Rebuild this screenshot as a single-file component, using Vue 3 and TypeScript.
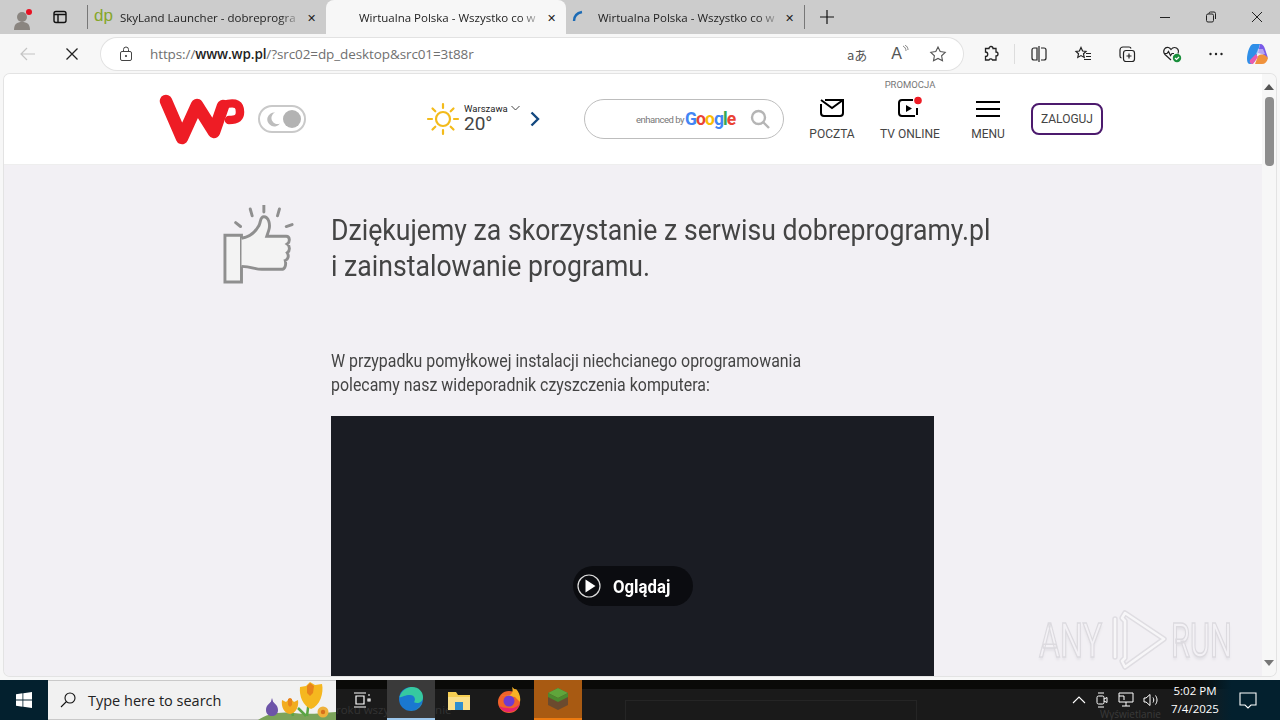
<template>
  <div class="screen">
    <div class="tabstrip">
      <div class="profile">
        <svg width="24" height="26" viewBox="0 0 24 26">
          <circle cx="12" cy="12" r="5" fill="#8a8580" />
          <path d="M4 25c0-6 3-8 8-8s8 2 8 8z" fill="#8a8580" />
          <circle cx="19" cy="7" r="3" fill="#e81123" />
        </svg>
      </div>
      <div class="tabs-btn">
        <svg width="16" height="16" viewBox="0 0 16 16" fill="none" stroke="#111" stroke-width="1.4">
          <rect x="2" y="2.5" width="12" height="11" rx="2" />
          <path d="M2 5.5h12M6 5.5v8" />
        </svg>
      </div>
      <div class="tab first">
        <span class="fav-dp">dp</span>
        <span class="tab-title">SkyLand Launcher - dobreprogra</span>
        <span class="tab-x">✕</span>
      </div>
      <div class="tab active">
        <span class="tab-title">Wirtualna Polska - Wszystko co w</span>
        <span class="tab-x">✕</span>
      </div>
      <div class="tab">
        <svg class="spinner" width="14" height="14" viewBox="0 0 14 14" fill="none">
          <path d="M2 11C2 6 5 3 10 2" stroke="#1c6bb5" stroke-width="2.4" />
        </svg>
        <span class="tab-title">Wirtualna Polska - Wszystko co w</span>
        <span class="tab-x">✕</span>
      </div>
      <div class="new-tab">
        <svg width="16" height="16" viewBox="0 0 16 16" stroke="#111" stroke-width="1.2"><path d="M8 1v14M1 8h14" /></svg>
      </div>
      <div class="win-controls">
        <svg width="12" height="12" viewBox="0 0 12 12" stroke="#222" fill="none"><path d="M1 6.5h10" /></svg>
        <svg width="12" height="12" viewBox="0 0 12 12" stroke="#222" fill="none"><rect x="1.5" y="3" width="7" height="8" rx="1.5" /><path d="M4 3V2.5A1.5 1.5 0 0 1 5.5 1H9a1.5 1.5 0 0 1 1.5 1.5V8" /></svg>
        <svg width="12" height="12" viewBox="0 0 12 12" stroke="#222" fill="none"><path d="M1 1l10 10M11 1L1 11" /></svg>
      </div>
    </div>

    <div class="toolbar">
      <svg class="nav-back" width="16" height="16" viewBox="0 0 16 16" fill="none" stroke="#c4c4c4" stroke-width="1.2"><path d="M15 8H1M7 2L1 8l6 6" /></svg>
      <svg class="nav-stop" width="14" height="14" viewBox="0 0 14 14" fill="none" stroke="#222" stroke-width="1.3"><path d="M1.5 1.5l11 11M12.5 1.5l-11 11" /></svg>
      <div class="address">
        <svg width="14" height="16" viewBox="0 0 14 16" fill="none" stroke="#444"><rect x="1.5" y="5.5" width="11" height="9" rx="1.5" /><path d="M4.5 5.5V3.5a2.5 2.5 0 0 1 5 0v2" /><circle cx="7" cy="10" r=".7" fill="#444" /></svg>
        <span class="url"><span class="dim">https://</span><b>www.wp.pl</b><span class="dim">/?src02=dp_desktop&amp;src01=3t88r</span></span>
        <div class="addr-icons">
          <span class="trans">aあ</span>
          <span class="read">A<svg width="7" height="10" viewBox="0 0 7 10" fill="none" stroke="#666" stroke-width=".8"><path d="M1 1c2 1 3 3 3 5M3 0c2 1 3 3 3 5" /></svg></span>
          <svg width="18" height="18" viewBox="0 0 18 18" fill="none" stroke="#555" stroke-width="1.1"><path d="M9 2l2.2 4.6 5 .7-3.600 3.500.9 5L9 13.400l-4.500 2.400.9-5L1.800 7.300l5-.7z" /></svg>
        </div>
      </div>
      <div class="tool-icons">
        <svg width="18" height="18" viewBox="0 0 18 18" fill="none" stroke="#222" stroke-width="1.3"><path d="M7 3.500a2 2 0 0 1 4 0h3v3.500a2 2 0 0 1 0 4V15h-3.500a2 2 0 0 0-3.500 0H3.500v-3.500a2 2 0 0 0 0-4.500V3.500z" /></svg>
        <span class="tool-sep"></span>
        <svg width="18" height="18" viewBox="0 0 18 18" fill="none" stroke="#222" stroke-width="1.2"><path d="M7 3H4a2 2 0 0 0-2 2v8a2 2 0 0 0 2 2h3zM11 3h3a2 2 0 0 1 2 2v8a2 2 0 0 1-2 2h-3M9 1v16" /></svg>
        <svg width="18" height="18" viewBox="0 0 18 18" fill="none" stroke="#222" stroke-width="1.2"><path d="M7 2.500l1.600 3.500 3.400.4-2.500 2.400.7 3.600L7 10.600l-3.200 1.800.7-3.600L2 6.400l3.400-.4zM12 8.500h5M12 11.500h5M10 14.500h7" /></svg>
        <svg width="18" height="18" viewBox="0 0 18 18" fill="none" stroke="#222" stroke-width="1.2"><rect x="5.500" y="5.500" width="11" height="11" rx="2.500" /><path d="M11 8.500v5M8.500 11h5M13 3.500A2 2 0 0 0 11 2H5a3 3 0 0 0-3 3v6a2 2 0 0 0 1.500 2" /></svg>
        <svg width="20" height="18" viewBox="0 0 20 18" fill="none" stroke="#222" stroke-width="1.2"><path d="M9 15L3 9.500C0 6 3 1.500 6.500 2.500 8 3 9 4.500 9 4.500S10.500 2.500 12.500 2.500c3 0 5 3 3.500 6M2 8.500h3l1.500-2 2 4 1.500-2h2" /><circle cx="15" cy="13" r="4.200" fill="#1a8f3c" stroke="none" /><path d="M13 13l1.500 1.500 2.500-2.500" stroke="#fff" /></svg>
        <svg width="16" height="16" viewBox="0 0 16 16" fill="#222"><circle cx="2.500" cy="8" r="1.200" /><circle cx="8" cy="8" r="1.200" /><circle cx="13.500" cy="8" r="1.200" /></svg>
        <svg class="copilot" width="24" height="24" viewBox="0 0 24 24">
          <path d="M7 2h7l-4 14c-1 4-3 6-6 6-2 0-3-2-3-5C1 11 4 2 7 2z" fill="#2f8fe8" />
          <path d="M14 2c3 0 4 2 5 5l3 9-6-4-4-1z" fill="#7a5be8" />
          <path d="M22 16c-1 4-3 6-6 6H9l3-8c3-3 7-2 10 2z" fill="#f0923c" />
          <path d="M7 22c-2 0-4-1-3-4l6-6 2 3z" fill="#e85bb0" />
          <path d="M12 7h5l2 5-6 1-3-1z" fill="#e8e0f8" opacity=".55" />
        </svg>
      </div>
    </div>

    <div class="viewport">
      <div class="page">
        <header class="site-header">
          <svg class="wp-logo" width="86" height="54" viewBox="0 0 86 54" fill="none" stroke="#ee1c25" stroke-linecap="round" stroke-linejoin="round">
            <path d="M7 8l16 37L38 12l17 27 9-26" stroke-width="12.5" />
            <path d="M64 12C78 8 81 12 81 19C81 25 78 27 70 27" stroke-width="8.5" />
          </svg>
          <div class="theme-toggle">
            <svg width="16" height="16" viewBox="0 0 16 16"><path d="M10 1.500a7 7 0 1 0 5 11 6 6 0 0 1-5-11z" fill="#bdbdbd" /></svg>
            <span class="knob"></span>
          </div>
          <div class="weather">
            <svg width="34" height="34" viewBox="0 0 34 34" fill="none" stroke="#f3bb1b" stroke-width="2.2" stroke-linecap="round">
              <circle cx="17" cy="17" r="7" />
              <path d="M17 2v4M17 28v4M2 17h4M28 17h4M6.500 6.500l2.800 2.800M24.700 24.700l2.800 2.800M6.500 27.500l2.800-2.800M24.700 9.300l2.800-2.800" />
            </svg>
            <div class="weather-text">
              <div class="city">Warszawa <svg width="9" height="6" viewBox="0 0 9 6" fill="none" stroke="#444"><path d="M.5 1l4 4 4-4" /></svg></div>
              <div class="temp">20°</div>
            </div>
            <svg width="10" height="16" viewBox="0 0 10 16" fill="none" stroke="#13487f" stroke-width="2.4"><path d="M1.500 1.500L8 8l-6.500 6.500" /></svg>
          </div>
          <div class="search">
            <span class="enhanced">enhanced by</span>
            <span class="google"><i class="b">G</i><i class="r">o</i><i class="y">o</i><i class="b">g</i><i class="g">l</i><i class="r">e</i></span>
            <svg width="20" height="20" viewBox="0 0 20 20" fill="none" stroke="#b5b5b5" stroke-width="2.4"><circle cx="8.500" cy="8.500" r="6.500" /><path d="M13 13l6 6" /></svg>
          </div>
          <div class="nav-item first-nav">
            <svg width="24" height="19" viewBox="0 0 24 19" fill="none" stroke="#000" stroke-width="2"><path d="M5 1h18v13a3 3 0 0 1-3 3H4a3 3 0 0 1-3-3V5M1 1l11 8 11-8" /></svg>
            <span>POCZTA</span>
          </div>
          <div class="nav-item">
            <small>PROMOCJA</small>
            <svg width="26" height="22" viewBox="0 0 26 22"><path d="M16 4H5a3 3 0 0 0-3 3v10a3 3 0 0 0 3 3h13" fill="none" stroke="#000" stroke-width="2" /><path d="M9 9l6 3.500-6 3.500z" /><path d="M20 12v7" stroke="#000" stroke-width="2" /><circle cx="21" cy="4.500" r="3.800" fill="#ee1c25" /></svg>
            <span>TV ONLINE</span>
          </div>
          <div class="nav-item">
            <svg width="24" height="18" viewBox="0 0 24 18" stroke="#000" stroke-width="2"><path d="M0 2h24M0 9h24M0 16h24" /></svg>
            <span>MENU</span>
          </div>
          <div class="login">ZALOGUJ</div>
        </header>

        <main class="content">
          <div class="thanks">
            <svg class="thumb" width="72" height="80" viewBox="0 0 74 82" fill="none" stroke="#8f8f8f">
              <path d="M2 31h17v48H2z" stroke-width="3" fill="#f3f3f3" />
              <path d="M19 34c8-1 14-6 18-13 2-4 1-9 5-9 5 0 7 8 5 14l-2 6h20c4 0 4 6 1 8 3 2 3 7 0 9 2 3 1 7-2 8 1 4 0 9-4 9H40c-8 0-10-3-21-3" stroke-width="3" fill="#f3f3f3" />
              <path d="M13 18l5 4M28 4l2 7M42 0v7M58 4l-2 7M71 20l-6 2" stroke-width="3" stroke-linecap="round" />
            </svg>
            <h1>Dziękujemy za skorzystanie z serwisu dobreprogramy.pl<br />i zainstalowanie programu.</h1>
          </div>
          <p class="lead">W przypadku pomyłkowej instalacji niechcianego oprogramowania<br />polecamy nasz wideporadnik czyszczenia komputera:</p>
          <div class="video">
            <div class="watch">
              <svg width="24" height="24" viewBox="0 0 24 24"><circle cx="12" cy="12" r="11" fill="none" stroke="#ddd" stroke-width="1.2" /><path d="M8.500 5.500l10 6.500-10 6.500z" fill="#fff" /></svg>
              <span>Oglądaj</span>
            </div>
          </div>
        </main>
      </div>

      <div class="scrollbar">
        <span class="arrow up"></span>
        <span class="thumb-bar"></span>
        <span class="arrow down"></span>
      </div>
    </div>

    <footer class="taskbar">
      <div class="ghost-text">roku wszystkie gronie</div>
      <div class="ghost-box"></div>
      <div class="ghost-note">Wyświetlanie</div>
      <div class="start">
        <svg width="16" height="16" viewBox="0 0 16 16" fill="#fff"><path d="M0 2.200l6.500-.9v6.300H0zM7.300 1.200L16 0v7.600H7.300zM0 8.400h6.500v6.300L0 13.800zM7.300 8.400H16V16l-8.700-1.200z" /></svg>
      </div>
      <div class="task-search">
        <svg width="16" height="16" viewBox="0 0 16 16" fill="none" stroke="#111" stroke-width="1.1"><circle cx="10" cy="6" r="5" /><path d="M6.500 9.500L1 15" /></svg>
        <span>Type here to search</span>
        <svg class="flowers" width="78" height="40" viewBox="0 0 78 40">
          <path d="M0 40c8-6 22-9 36-7s28 0 42-1v8z" fill="#7ba35a" />
          <path d="M52 12l-3 24M32 24l3 12M48 36l-8-8" stroke="#5aa544" stroke-width="2.500" fill="none" />
          <path d="M14 21c-2 2-6 4-6 9 0 4 3 6 6 6s6-2 6-6c0-5-4-7-6-9z" fill="#6d54a8" />
          <path d="M14 18l-1.500 5h3z" fill="#6d54a8" />
          <path d="M24 20l4 2 4-4 4 4 4-2c1 7-2 13-8 14-6-1-9-7-8-14z" fill="#f2ac1f" />
          <path d="M30 19l2-1 2 1 0 6-2 2-2-2z" fill="#e8831a" />
          <path d="M42 7l6-1 4-4 5 3 7-1c2 9-2 22-11 25-8-3-12-13-11-22z" fill="#f5b71f" />
          <path d="M49 6l3-3 4 3-1 7-3 3-3-3z" fill="#e8831a" />
          <circle cx="65" cy="32" r="5.500" fill="#eeb13a" />
          <circle cx="65" cy="32" r="2.200" fill="#d6701c" />
        </svg>
      </div>
      <div class="task-apps">
        <div class="app wide">
          <svg width="18" height="16" viewBox="0 0 18 16" fill="none" stroke="#fff" stroke-width="1.2"><path d="M1 1h12M1 15h12M3 4h8v8H3zM15 3h2M15 7h2v2h-2z" /></svg>
        </div>
        <div class="app edge">
          <svg width="26" height="26" viewBox="0 0 26 26">
            <circle cx="13" cy="13" r="12" fill="#1a78d0" />
            <path d="M1.500 11C4 3 11 1 14 1c7 0 11 5 11 10 0 4-3 6-6 6-2 0-3-1-3-1 2-2 1-7-4-7-6 0-8.500 3-10.500 2z" fill="#36c9a0" />
            <path d="M24 17c-2 5-7 8-12 8 3 0 7-1 10-5z" fill="#5fd070" />
          </svg>
        </div>
        <div class="app">
          <svg width="24" height="22" viewBox="0 0 24 22"><path d="M1 3h8l2 3h12v15H1z" fill="#f7cf52" /><path d="M1 8h22v13H1z" fill="#fbe08a" /><path d="M8 13h8v8H8z" fill="#2f8fd0" /></svg>
        </div>
        <div class="app wide">
          <svg width="26" height="28" viewBox="0 0 26 28"><circle cx="13" cy="16" r="11" fill="#f0622a" /><path d="M5 9c3 1 6 1 9 0 3-2 3-5 2-8 2 1 2 3 4 2 3 3 5 8 4 13l-5-5z" fill="#f9b225" /><path d="M3 20c2 4 6 6 10 6 5 0 9-3 11-8-3 3-7 5-12 4-4 0-7-1-9-2z" fill="#e8246a" /><circle cx="13" cy="15" r="5.500" fill="#6f3bd0" /></svg>
        </div>
        <div class="app minecraft">
          <svg width="24" height="24" viewBox="0 0 24 24"><path d="M12 1l10 5v12l-10 5-10-5V6z" fill="#6b4a2e" /><path d="M12 1l10 5-10 5L2 6z" fill="#5fa53b" /><path d="M2 6l10 5v4L2 10zM22 6l-10 5v4l10-5z" fill="#4b8a2e" /></svg>
        </div>
      </div>
      <div class="tray">
        <svg width="14" height="8" viewBox="0 0 14 8" fill="none" stroke="#fff" stroke-width="1.1"><path d="M1 7l6-6 6 6" /></svg>
        <svg width="14" height="18" viewBox="0 0 14 18" fill="none" stroke="#fff"><rect x="2" y="5" width="7" height="8" rx="1.500" /><path d="M9 8l3-1.500v5L9 10M3 2h6M3 16h6" /></svg>
        <svg width="16" height="16" viewBox="0 0 16 16" fill="none" stroke="#fff"><path d="M1 1h14v9H1zM8 10v4M4 14h8M1 4h5v4" /></svg>
        <svg width="16" height="16" viewBox="0 0 16 16" fill="none" stroke="#fff"><path d="M1 6h2l4-3.500v11L3 10H1zM10 5.500c1 1.500 1 3.500 0 5M12.500 3.500c2 3 2 6 0 9" /></svg>
        <div class="clock"><div>5:02 PM</div><div>7/4/2025</div></div>
        <svg class="notif" width="20" height="20" viewBox="0 0 20 20" fill="none" stroke="#fff" stroke-width="1.1"><path d="M2 3h16v12h-5l-3 3-3-3H2z" /></svg>
      </div>
    </footer>

    <div class="watermark">
      <span class="wm-any">ANY</span>
      <svg width="58" height="66" viewBox="0 0 58 66" fill="none" stroke-linejoin="round" stroke-linecap="round">
        <g stroke="#dfdde2" stroke-width="5.5">
          <path d="M15 6l39 26-39 28-3-6 3-3V14l-3-3z" />
          <path d="M5 12v38" />
        </g>
        <g stroke="#f7f6f8" stroke-width="2.5">
          <path d="M15 6l39 26-39 28-3-6 3-3V14l-3-3z" />
          <path d="M5 12v38" />
        </g>
      </svg>
      <span class="wm-run">RUN</span>
    </div>
  </div>
</template>

<script setup lang="ts">
</script>

<style>
html, body { margin: 0; padding: 0; overflow: hidden; }
</style>

<style scoped>
.screen {
  width: 1280px; height: 720px; display: flex; flex-direction: column; position: relative;
  overflow: hidden; background: #f7f7f7; font-family: "Open Sans", "Liberation Sans", sans-serif;
}
.tabstrip { height: 34px; background: #cccccc; display: flex; align-items: center; flex: none; }
.profile { width: 44px; display: flex; justify-content: center; padding-top: 2px; box-sizing: border-box; }
.tabs-btn { width: 32px; margin-right: 11px; display: flex; justify-content: center; }
.tab {
  width: 238px; height: 34px; display: flex; align-items: center; box-sizing: border-box; flex: none;
  padding: 0 9px 0 7px; gap: 8px; font-size: 11.5px; color: #222;
}
.tab.first { width: 239px; position: relative; }
.tab.first::before { content: ""; position: absolute; left: 0; top: 5px; height: 24px; width: 1px; background: #777; }
.tab.active { width: 240px; background: #f7f7f7; border-radius: 8px 8px 0 0; padding-left: 33px; }
.tab-title {
  flex: 1; overflow: hidden; white-space: nowrap; min-width: 0;
  -webkit-mask-image: linear-gradient(to right, #000 90%, rgba(0, 0, 0, .25));
  mask-image: linear-gradient(to right, #000 90%, rgba(0, 0, 0, .25));
}
.tab-x { font-size: 11px; color: #222; width: 12px; text-align: center; flex: none; }
.fav-dp { color: #86a62a; font-size: 17px; font-family: "Liberation Sans", sans-serif; width: 18px; line-height: 16px; padding-bottom: 2px; }
.spinner { margin-left: -1px; margin-right: 4px; flex: none; }
.new-tab { width: 44px; display: flex; justify-content: center; border-left: 1px solid #777; height: 24px; align-items: center; box-sizing: border-box; }
.win-controls { margin-left: auto; display: flex; gap: 34px; padding-right: 17px; }

.toolbar { height: 40px; flex: none; display: flex; align-items: center; background: #f7f7f7; }
.nav-back { margin-left: 20px; flex: none; }
.nav-stop { margin-left: 29px; flex: none; }
.address {
  margin-left: 22px; width: 862px; flex: none; height: 32px; border-radius: 16px; background: #fff;
  box-shadow: 0 0 0 1px #e2e2e2; display: flex; align-items: center; box-sizing: border-box; padding: 0 16px 0 18px;
}
.url { margin-left: 17px; font-size: 13.5px; color: #222; white-space: nowrap; letter-spacing: -.1px; }
.url b { font-weight: 600; }
.dim { color: #707070; }
.addr-icons { margin-left: auto; display: flex; align-items: center; gap: 20px; color: #555; }
.trans { font-size: 13px; margin-right: 4px; font-family: "Noto Sans CJK JP", sans-serif; }
.read { font-size: 16px; display: flex; align-items: flex-start; font-family: "Liberation Sans", sans-serif; }
.tool-icons { display: flex; align-items: center; margin-left: 19px; gap: 26px; }
.tool-sep { width: 1px; height: 20px; background: #ddd; margin: 0 -11px 0 -12px; }
.copilot { margin-left: -4px; }

.viewport {
  flex: 1; min-height: 0; display: flex; margin: 0 4px 4px 4px; border-radius: 6px; overflow: hidden;
  box-shadow: 0 0 0 1px #e3e3e3;
}
.page { flex: 1; min-width: 0; overflow: hidden; background: #f2f0f4; }
.site-header {
  height: 91px; background: #fff; display: flex; align-items: center; border-bottom: 1px solid #eeeeee; box-sizing: border-box;
  padding-left: 155px; font-family: Roboto, sans-serif;
}
.wp-logo { flex: none; margin-top: 2px; }
.theme-toggle {
  margin-left: 13px; width: 48px; height: 28px; box-sizing: border-box; flex: none;
  border: 2px solid #c9c9c9; border-radius: 14px; display: flex; align-items: center; justify-content: space-between; padding: 0 3px 0 5px;
}
.knob { width: 18px; height: 18px; border-radius: 50%; background: #b3b3b3; }
.weather { margin-left: 120px; width: 158px; flex: none; display: flex; align-items: center; gap: 4px; }
.weather-text { width: 62px; margin-top: -2px; }
.city { font-size: 9.5px; color: #222; display: flex; align-items: center; gap: 3px; line-height: 11px; }
.temp { font-size: 19px; color: #444; line-height: 20px; }
.search {
  width: 200px; height: 40px; box-sizing: border-box; flex: none;
  border: 1px solid #bdbdbd; border-radius: 20px; background: #fff; display: flex; align-items: center; padding: 0 12px 0 51px;
}
.enhanced { font-size: 9.5px; color: #777; letter-spacing: -.5px; white-space: nowrap; }
.google { font-size: 17.5px; font-weight: 700; letter-spacing: -.9px; margin-right: 15px; margin-left: 1px; }
.google i { font-style: normal; }
.google .b { color: #4285f4; } .google .r { color: #ea4335; } .google .y { color: #fbbc05; } .google .g { color: #34a853; }
.nav-item {
  width: 78px; flex: none; align-self: stretch; box-sizing: border-box; padding-bottom: 23px;
  display: flex; flex-direction: column; align-items: center; justify-content: flex-end; gap: 9px;
  font-size: 12px; line-height: 14px; color: #444; white-space: nowrap;
}
.first-nav { margin-left: 9px; }
.nav-item small { font-size: 9.5px; color: #777; line-height: 11px; margin-bottom: -3px; }
.login {
  margin-left: 4px; width: 72px; height: 32px; box-sizing: border-box; border: 2px solid #4c1a6d; border-radius: 8px; flex: none;
  display: flex; align-items: center; justify-content: center; font-size: 12px; color: #444;
}
.content { font-family: Roboto, sans-serif; }
.thanks { display: flex; align-items: flex-start; height: 82px; padding: 40px 0 0 219px; }
.thumb { flex: none; margin-right: 36px; }
h1 {
  margin: 7px 0 0; font-weight: 400; font-size: 30px; line-height: 36px; color: #444; white-space: nowrap;
  transform: scaleX(.888); transform-origin: left top;
}
.lead {
  margin: 62px 0 0 327px; font-size: 18px; line-height: 24px; color: #444; white-space: nowrap;
  transform: scaleX(.885); transform-origin: left top;
}
.video {
  margin: 19px 0 0 327px; width: 603px; height: 400px; background: #1a1c23; display: flex; justify-content: center; padding-top: 150px; box-sizing: border-box;
}
.watch {
  width: 120px; height: 40px; border-radius: 20px; background: #0b0c10;
  display: flex; align-items: center; padding-left: 4px; box-sizing: border-box; gap: 12px; color: #fff;
  font-size: 18px; font-weight: 700;
}
.watch span { transform: scaleX(.93); transform-origin: left center; }
.scrollbar {
  width: 14px; flex: none; background: #f7f7f7; display: flex; flex-direction: column; align-items: center; padding-top: 10px; box-sizing: border-box;
}
.thumb-bar { width: 9px; height: 69px; border-radius: 4px; background: #8d8d8d; margin-top: 7px; }
.arrow { width: 0; height: 0; border-left: 5px solid transparent; border-right: 5px solid transparent; }
.arrow.up { border-bottom: 6px solid #555; }
.arrow.down { border-top: 6px solid #777; margin-top: auto; margin-bottom: 10px; }

.taskbar {
  height: 40px; flex: none; display: flex; align-items: stretch; color: #fff; position: relative;
  background: linear-gradient(#0a0a08 0 9px, #1a1a1a 9px);
}
.ghost-text { position: absolute; left: 336px; top: 22px; font-size: 11.5px; color: #333; white-space: nowrap; }
.ghost-box { position: absolute; left: 625px; top: 20px; width: 290px; height: 30px; border: 1px solid #252525; }
.ghost-note { position: absolute; left: 1100px; top: 28px; font-size: 10px; line-height: 12px; color: #3a3a3a; white-space: nowrap; }
.start { width: 48px; background: #03202e; display: flex; align-items: center; justify-content: center; }
.task-search {
  width: 288px; background: #f1f1f1; display: flex; align-items: center; padding-left: 12px; box-sizing: border-box; gap: 12px;
  color: #222; font-size: 14.5px; position: relative; border-top: 1px solid #c9c9c9; border-bottom: 1px solid #c9c9c9;
}
.flowers { position: absolute; right: 0; bottom: -1px; }
.task-apps { display: flex; position: relative; }
.app { width: 48px; display: flex; justify-content: center; align-items: center; box-sizing: border-box; }
.app.wide { width: 51px; }
.edge { background: #3a3a3a; border-bottom: 2px solid #9cc7ec; }
.minecraft { background: #a85a12; border-bottom: 2px solid #ec7a10; }
.tray { margin-left: auto; display: flex; align-items: center; gap: 9px; position: relative; background: linear-gradient(to right, transparent 62%, #03202e 78%); padding-left: 14px; }
.clock { text-align: center; font-size: 11.5px; line-height: 18px; margin-left: 3px; width: 48px; white-space: nowrap; }
.notif { margin: 0 22px 0 10px; }

.watermark {
  position: absolute; left: 1039px; top: 607px; display: flex; align-items: center; height: 66px;
  font: 400 49px Roboto, sans-serif; color: #f3f1f5; -webkit-text-stroke: 1.6px #dcdadf; text-shadow: 0 3px 3px #e4e2e7;
}
.watermark svg { flex: none; margin-right: 3px; }
.watermark span { display: block; white-space: nowrap; transform-origin: left center; }
.wm-any { width: 71px; transform: scaleX(.66); }
.wm-run { width: 64px; transform: scaleX(.63); }
</style>
